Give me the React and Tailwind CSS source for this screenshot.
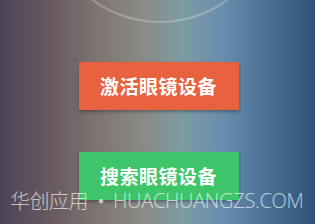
import React from 'react'

export default function App(){
  return (
    <div
      className="relative w-[315px] h-[224px] overflow-hidden bg-[linear-gradient(90deg,#4b4458_0%,#66585f_15%,#7f7673_32%,#8a8a85_45%,#7d9ba2_58%,#6a8ead_70%,#4c7598_83%,#2f5275_100%)]"
      style={{ fontFamily: '"Noto Sans CJK SC", "Noto Sans", sans-serif' }}
    >
      <div className="absolute left-[45px] top-[-207px] w-[230px] h-[230px] rounded-full border-2 border-white/25 blur-[0.5px]" />

      <div className="flex flex-col items-center pt-[62px] gap-[42px]">
        <button className="w-[160px] h-[48px] ml-[2px] bg-[#e9623f] text-white font-bold text-[19px] tracking-[0.5px] shadow-[0_2px_3px_rgba(0,0,0,0.3)]">
          激活眼镜设备
        </button>
        <button className="w-[160px] h-[48px] ml-[2px] bg-[#3ec56a] text-white font-bold text-[19px] tracking-[0.5px] shadow-[0_2px_3px_rgba(0,0,0,0.3)]">
          搜索眼镜设备
        </button>
      </div>

      <div className="absolute left-[10px] top-[187px] flex items-center h-[28px] text-white/65 whitespace-nowrap">
        <span className="text-[20px] font-light tracking-[-0.5px]" style={{ fontFamily: '"Noto Sans CJK SC", sans-serif' }}>华创应用</span>
        <span className="text-[20px] ml-[3px] mr-[2px]">•</span>
        <span className="text-[20px] font-light tracking-[-0.3px]" style={{ fontFamily: '"Open Sans", "Noto Sans", sans-serif' }}>HUACHUANGZS.COM</span>
      </div>
    </div>
  )
}
